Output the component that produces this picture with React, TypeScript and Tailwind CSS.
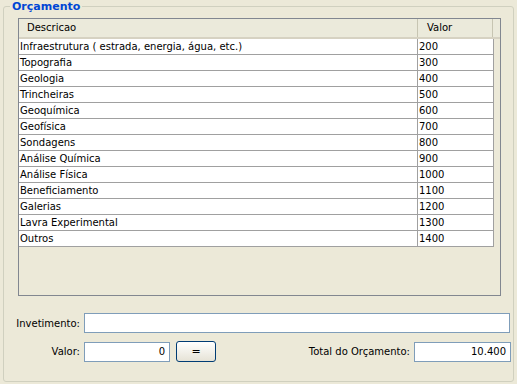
import React from "react";

const rows: [string, string][] = [
  ["Infraestrutura ( estrada, energia, água, etc.)", "200"],
  ["Topografia", "300"],
  ["Geologia", "400"],
  ["Trincheiras", "500"],
  ["Geoquímica", "600"],
  ["Geofísica", "700"],
  ["Sondagens", "800"],
  ["Análise Química", "900"],
  ["Análise Física", "1000"],
  ["Beneficiamento", "1100"],
  ["Galerias", "1200"],
  ["Lavra Experimental", "1300"],
  ["Outros", "1400"],
];

export default function App() {
  return (
    <div className="w-[520px] h-[389px] bg-white overflow-hidden text-[10px] text-black" style={{ fontFamily: '"DejaVu Sans", sans-serif' }}>
      <div className="w-[517px] h-[384px] bg-[#ece9d8] pl-[3px] pt-[6px]">
        <div className="relative w-[511px] h-[376px] border border-[#d0d0bf] rounded-[3px] pl-[14px] pt-[11px]">
          <div className="absolute left-[6px] top-[-7px] px-[2px] bg-[#ece9d8] font-bold text-[#0046d5] text-[11px] leading-[13px]">
            Orçamento
          </div>
          {/* table */}
          <div className="w-[483px] h-[278px] border border-[#828790] bg-[#ece9d8]">
            <div className="flex h-[20px] bg-[#ebeadb] border-b-[2px] border-[#d6d2c2]">
              <div className="w-[399px] pl-[8px] leading-[18px] border-r border-[#c7c5b2]">Descricao</div>
              <div className="w-[75px] pl-[9px] leading-[18px] border-r border-[#c7c5b2]">Valor</div>
            </div>
            <div>
              {rows.map(([d, v]) => (
                <div key={d} className="flex h-[16px] w-[475px] bg-white border-b border-[#a0a0a0]">
                  <div className="w-[399px] pl-[1px] leading-[15px] border-r border-[#a0a0a0] whitespace-nowrap overflow-hidden">{d}</div>
                  <div className="w-[76px] pl-[1px] leading-[15px] border-r border-[#a0a0a0]">{v}</div>
                </div>
              ))}
            </div>
          </div>
          {/* form */}
          <div className="mt-[17px] flex flex-col gap-[8px] pr-[2px]">
            <div className="flex items-center">
              <div className="-ml-[15px] w-[81px] text-right pr-[4px]">Invetimento:</div>
              <div className="w-[426px] h-[20px] bg-white border border-[#7f9db9]" />
            </div>
            <div className="flex items-center">
              <div className="-ml-[15px] w-[81px] text-right pr-[4px]">Valor:</div>
              <div className="w-[86px] h-[20px] bg-white border border-[#7f9db9] text-right pr-[4px] leading-[18px]">0</div>
              <button className="ml-[6px] w-[40px] h-[21px] rounded-[3px] border border-[#003c74] bg-gradient-to-b from-white to-[#e6e3d6] leading-[18px] text-[11px]">=</button>
              <div className="flex-1 text-right pr-[4px]">Total do Orçamento:</div>
              <div className="w-[97px] h-[20px] bg-white border border-[#7f9db9] text-right pr-[4px] leading-[18px]">10.400</div>
            </div>
          </div>
        </div>
      </div>
    </div>
  );
}
